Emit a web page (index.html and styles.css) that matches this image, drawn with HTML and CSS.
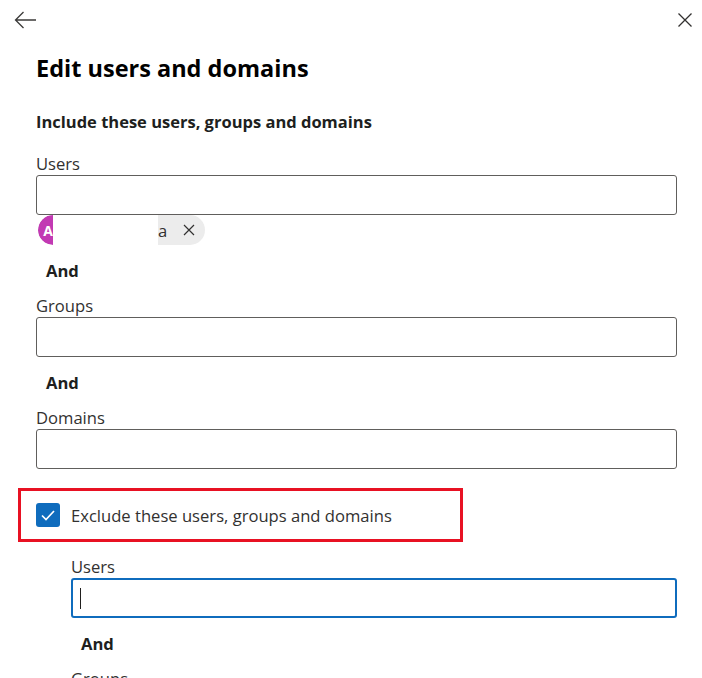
FILE: index.html
```html
<!DOCTYPE html>
<html lang="en">
<head>
    <meta charset="UTF-8">
    <title>Edit users and domains</title>
    <link rel="stylesheet" href="styles.css">
</head>
<body>
    <section class="panel">
        <div class="topBar">
            <button class="iconBtn backBtn" aria-label="Back">
                <svg width="24" height="20" viewBox="0 0 24 20">
                    <path d="M1.5 10 H22 M9.5 2 L1.5 10 L9.5 18" fill="none" stroke="#3b3a39" stroke-width="1.3"/>
                </svg>
            </button>
            <button class="iconBtn closeBtn" aria-label="Close">
                <svg width="16" height="16" viewBox="0 0 16 16">
                    <path d="M1.5 1.5 L14.5 14.5 M14.5 1.5 L1.5 14.5" fill="none" stroke="#323130" stroke-width="1.3"/>
                </svg>
            </button>
        </div>

        <h1 class="title">Edit users and domains</h1>
        <h2 class="subTitle">Include these users, groups and domains</h2>

        <div class="field">
            <label class="fieldLabel">Users</label>
            <div class="textBox"></div>
            <div class="chip">
                <span class="avatar">AS</span>
                <span class="hidden"></span>
                <span class="chipText">a</span>
                <svg class="chipClose" width="12" height="12" viewBox="0 0 12 12">
                    <path d="M1 1 L11 11 M11 1 L1 11" fill="none" stroke="#323130" stroke-width="1.2"/>
                </svg>
            </div>
        </div>

        <p class="andText">And</p>

        <div class="field">
            <label class="fieldLabel">Groups</label>
            <div class="textBox"></div>
        </div>

        <p class="andText">And</p>

        <div class="field">
            <label class="fieldLabel">Domains</label>
            <div class="textBox"></div>
        </div>

        <div class="highlight">
            <span class="checkBox">
                <svg width="18" height="18" viewBox="0 0 18 18">
                    <path d="M3 9.5 L7 13.5 L15 5" fill="none" stroke="#fff" stroke-width="1.7"/>
                </svg>
            </span>
            <span class="checkLabel">Exclude these users, groups and domains</span>
        </div>

        <div class="excludeBlock">
            <div class="field">
                <label class="fieldLabel">Users</label>
                <div class="textBox focused"><span class="caret"></span></div>
            </div>

            <p class="andText">And</p>

            <div class="field">
                <label class="fieldLabel">Groups</label>
                <div class="textBox"></div>
            </div>
        </div>
    </section>
</body>
</html>
```

FILE: styles.css
```css
* {
    box-sizing: border-box;
}

body {
    margin: 0;
    background-color: white;
    font-family: "Open Sans", "Noto Sans", sans-serif;
    color: #323130;
    overflow: hidden;
}

.panel {
    padding: 0 25px 0 36px;
}

.topBar {
    display: flex;
    justify-content: space-between;
    align-items: center;
    height: 40px;
    margin-left: -22px;
    margin-right: -16px;
}

.iconBtn {
    border: none;
    background: none;
    padding: 0;
    display: flex;
    align-items: center;
    cursor: pointer;
}

.title {
    margin: 12px 0 0;
    font-size: 23.5px;
    line-height: 32px;
    font-weight: 700;
    color: #000;
}

.subTitle {
    margin: 27px 0 0;
    font-size: 16.5px;
    line-height: 22px;
    font-weight: 700;
    color: #201f1e;
}

.field {
    margin-top: 20px;
}

.fieldLabel {
    display: block;
    font-size: 16.6px;
    line-height: 22px;
}

.textBox {
    height: 40px;
    border: 1px solid #605e5c;
    border-radius: 3px;
    background: white;
    display: flex;
    align-items: center;
}

.textBox.focused {
    border: 2px solid #0f6cbd;
}

.caret {
    width: 1px;
    height: 21px;
    margin-left: 7px;
    background-color: #201f1e;
}

.chip {
    display: inline-flex;
    align-items: center;
    height: 30px;
    margin: 0 0 0 2px;
    border-radius: 15px;
    background-color: #ececec;
    overflow: hidden;
}

.avatar {
    width: 30px;
    height: 30px;
    border-radius: 50%;
    background-color: #c239b3;
    color: white;
    font-size: 14px;
    font-weight: 700;
    display: flex;
    align-items: center;
    justify-content: center;
    letter-spacing: 1px;
}

.hidden {
    width: 105px;
    height: 30px;
    margin-left: -15px;
    background-color: white;
}

.chipText {
    font-size: 16.6px;
    margin-right: 16px;
}

.chipClose {
    margin-right: 10px;
}

.andText {
    margin: 15px 0 0 10px;
    font-size: 16.6px;
    line-height: 22px;
    font-weight: 700;
    color: #201f1e;
}

.andText + .field {
    margin-top: 13px;
}

.highlight {
    display: flex;
    align-items: center;
    gap: 11px;
    width: 445px;
    height: 54px;
    margin: 19px 0 0 -18px;
    padding-left: 15px;
    border: 3px solid #e81123;
}

.checkBox {
    width: 24px;
    height: 24px;
    border-radius: 3px;
    background-color: #0f6cbd;
    display: flex;
    align-items: center;
    justify-content: center;
}

.checkLabel {
    font-size: 16.6px;
}

.excludeBlock {
    padding-left: 35px;
}

.excludeBlock .field:first-child {
    margin-top: 14px;
}
```
